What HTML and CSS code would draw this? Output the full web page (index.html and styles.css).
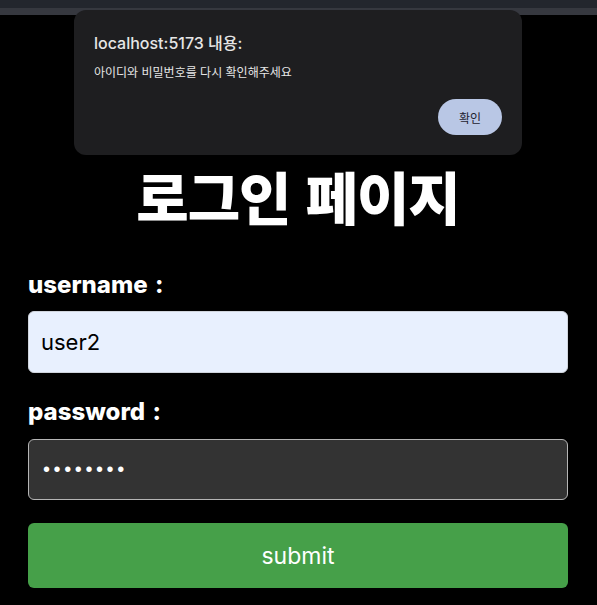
FILE: index.html
```html
<!DOCTYPE html>
<html lang="ko">
<head>
<meta charset="utf-8">
<link rel="stylesheet" href="styles.css">
</head>
<body>
<div class="topbar"><div class="topbar-a"></div><div class="topbar-b"></div></div>
<main class="page">
  <h1 class="title">로그인 페이지</h1>
  <form class="form">
    <label class="label" for="u">username :</label>
    <input class="field field-user" id="u" type="text" value="user2">
    <label class="label label-pw" for="p">password :</label>
    <input class="field field-pw" id="p" type="password" value="12345678">
    <button class="submit" type="button">submit</button>
  </form>
</main>
<div class="dialog">
  <div class="dialog-title">localhost:5173 내용:</div>
  <div class="dialog-msg">아이디와 비밀번호를 다시 확인해주세요</div>
  <div class="dialog-actions"><button class="dialog-btn" type="button">확인</button></div>
</div>
</body>
</html>
```
FILE: styles.css
```css
html, body {
  margin: 0;
  padding: 0;
  background: #000;
  font-family: Inter, "Noto Sans CJK KR", sans-serif;
}
.topbar { height: 15px; }
.topbar-a { height: 8px; background: #23262d; }
.topbar-b { height: 7px; background: #36383f; }
.page {
  padding: 0 29px 0 28px;
}
.title {
  margin: 0;
  padding-top: 136px;
  text-align: center;
  color: #fff;
  font-family: "Noto Sans CJK KR", sans-serif;
  font-weight: 900;
  font-size: 57px;
  line-height: 88px;
  letter-spacing: -1px;
}
.form {
  display: flex;
  flex-direction: column;
  margin-top: 32px;
}
.label {
  color: #fff;
  font-family: Inter, "Noto Sans CJK KR", sans-serif;
  font-weight: 800;
  font-size: 24px;
  line-height: 28px;
  letter-spacing: 0;
  word-spacing: 2px;
}
.label-pw { margin-top: 25px; }
.field {
  box-sizing: border-box;
  height: 62px;
  margin-top: 12px;
  padding: 0 12px;
  border-radius: 6px;
  font-family: Inter, sans-serif;
  font-size: 22px;
  outline: none;
}
.field-pw { margin-top: 13px; height: 61px; }
.field-user {
  background: #e8f0fe;
  border: 1px solid #cfd4dc;
  color: #000;
}
.field-pw {
  background: #333333;
  border: 1px solid #b5b5b5;
  color: #fff;
  padding-left: 14px;
  font-family: "Liberation Sans", sans-serif;
  font-size: 20px;
  letter-spacing: 3.6px;
}
.submit {
  height: 65px;
  margin-top: 23px;
  border: none;
  border-radius: 6px;
  background: #46a049;
  color: #fff;
  font-family: Inter, sans-serif;
  font-size: 23px;
}
.dialog {
  position: absolute;
  left: 74px;
  top: 10px;
  width: 448px;
  height: 145px;
  box-sizing: border-box;
  padding: 23px 20px 0 20px;
  background: #1e1e20;
  border-radius: 12px;
  font-family: Inter, "Noto Sans CJK KR", sans-serif;
}
.dialog-title {
  color: #e6e6e6;
  font-size: 16px;
  line-height: 20px;
  font-weight: 500;
}
.dialog-msg {
  margin-top: 12px;
  color: #e6e6e6;
  font-size: 12px;
  line-height: 16px;
}
.dialog-actions {
  display: flex;
  justify-content: flex-end;
  margin-top: 18px;
}
.dialog-btn {
  width: 64px;
  height: 36px;
  border: none;
  border-radius: 18px;
  background: #b9c7e5;
  color: #1e2230;
  font-family: "Noto Sans CJK KR", sans-serif;
  font-size: 12px;
}
```
